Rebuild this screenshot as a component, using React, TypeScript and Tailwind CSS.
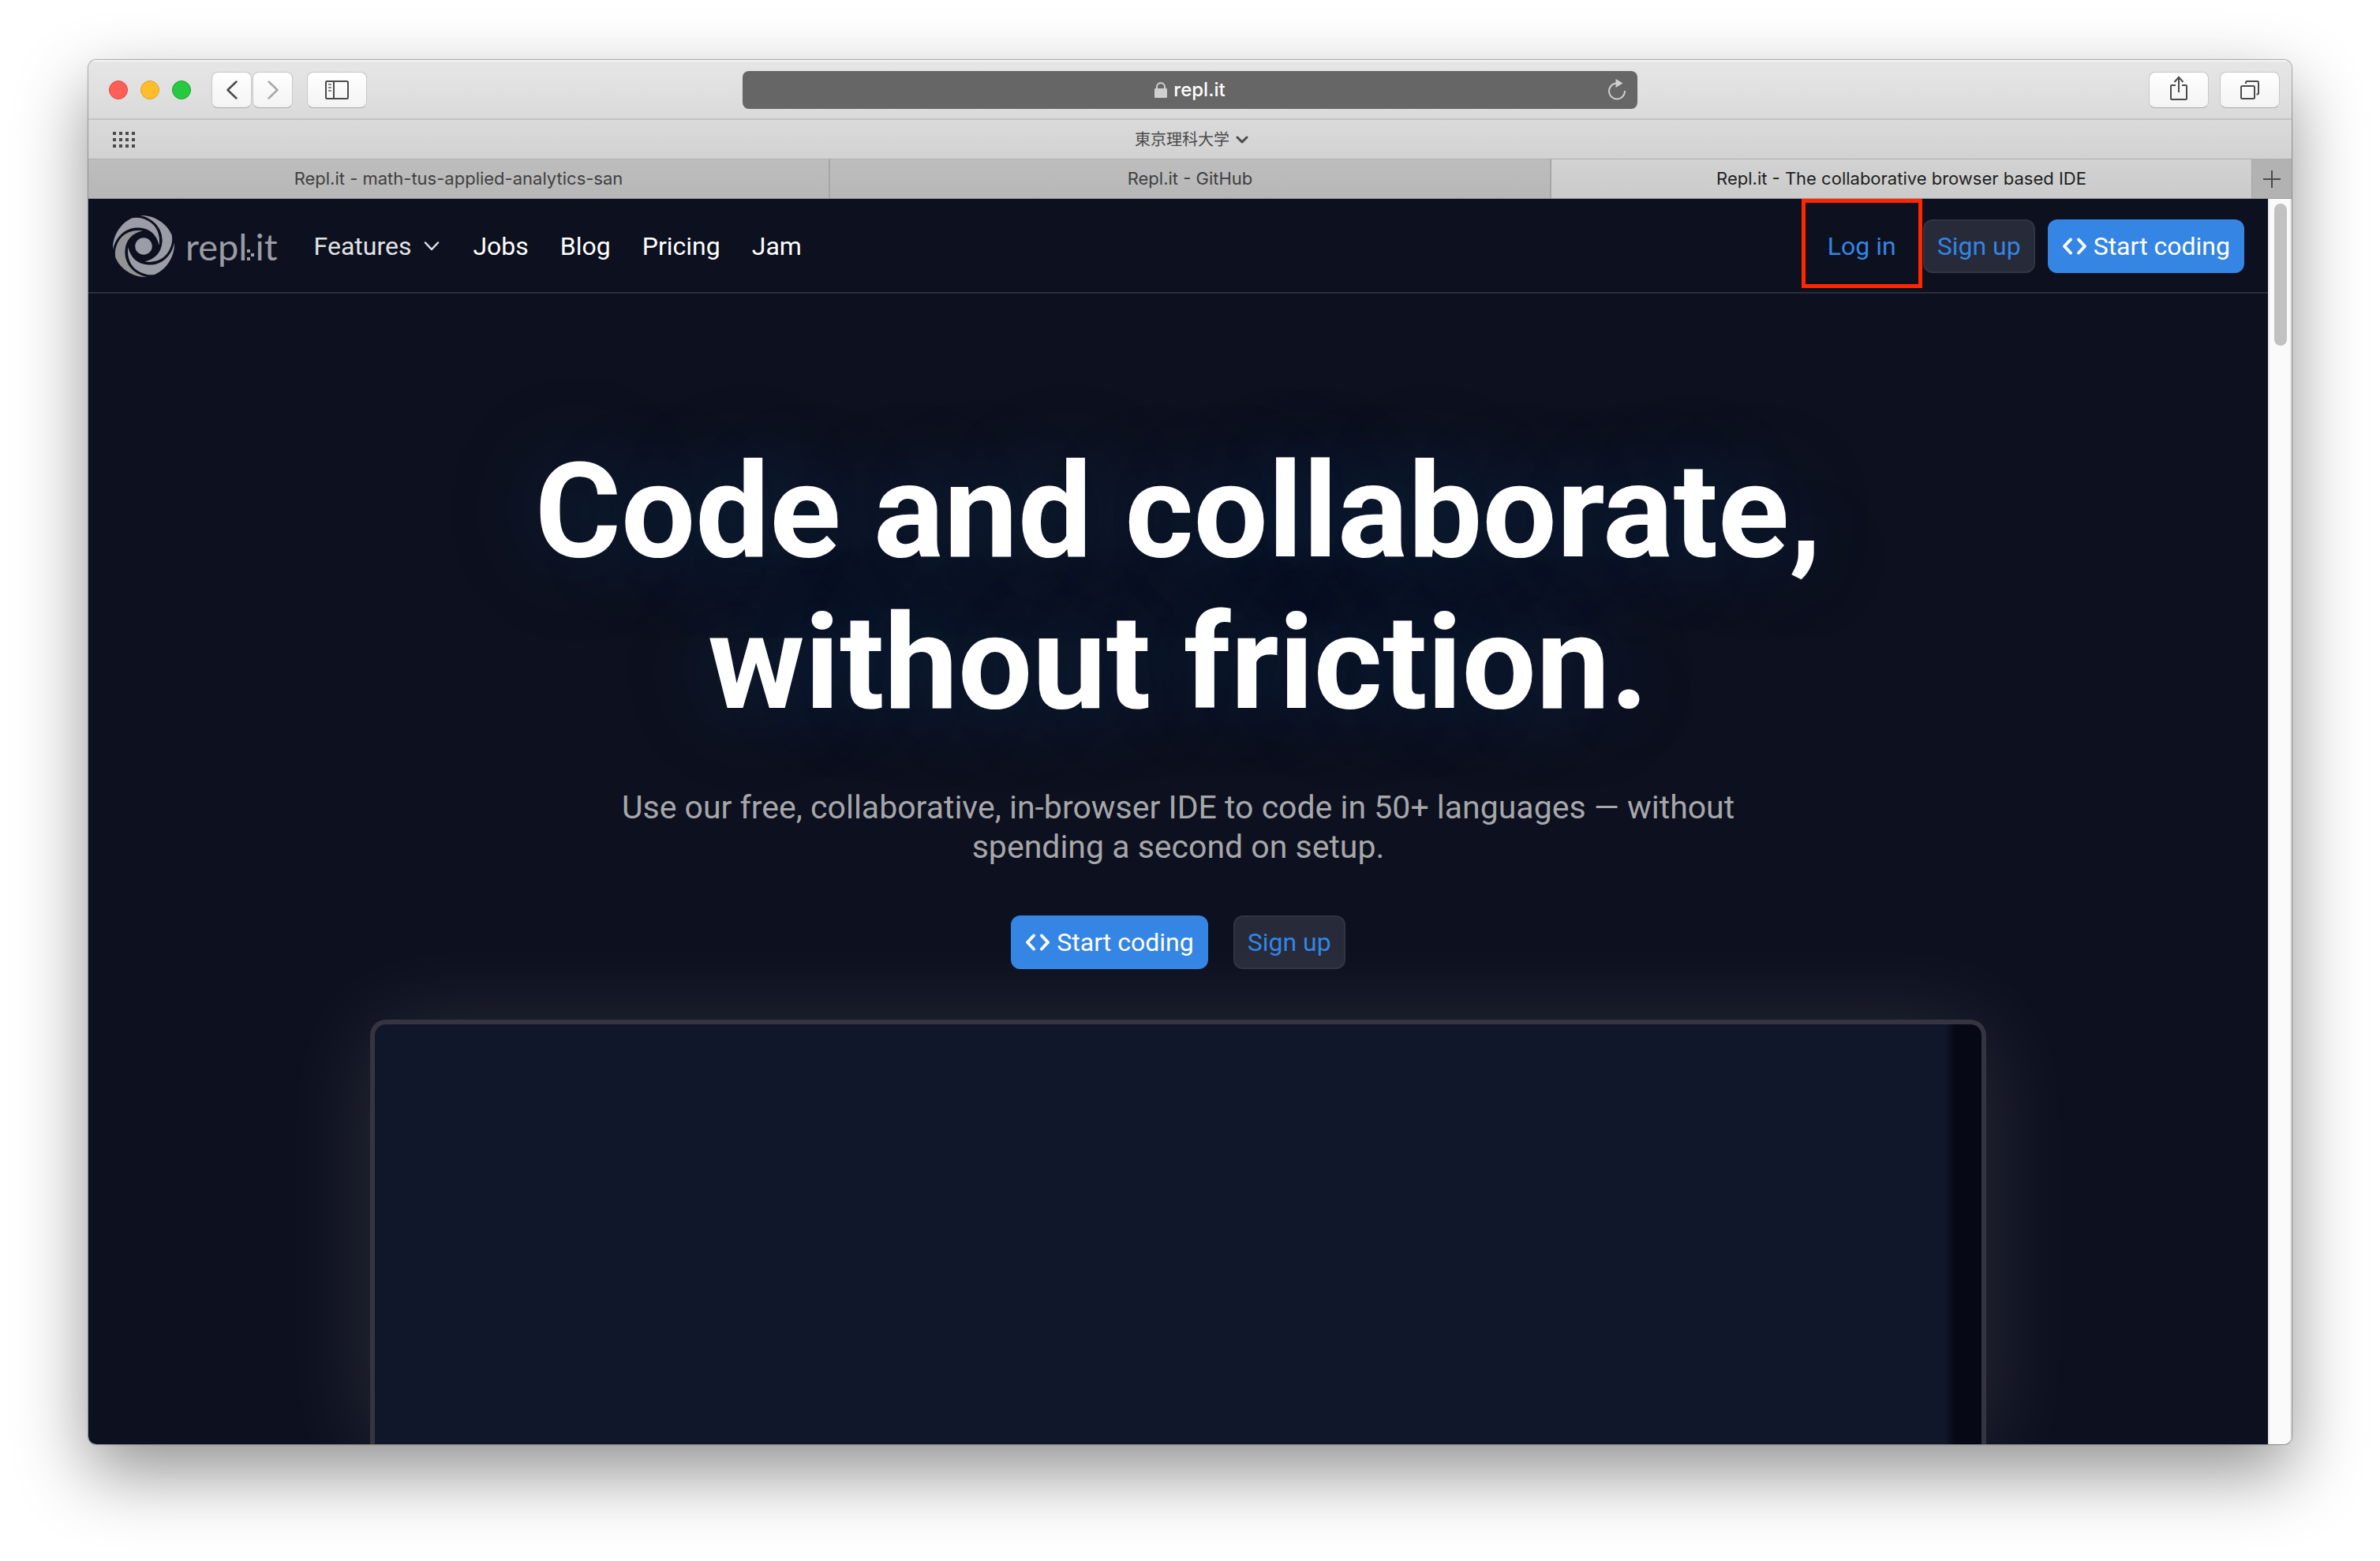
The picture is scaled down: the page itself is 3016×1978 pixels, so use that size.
import type { ReactNode } from "react";

const BLADE =
  "M40 170 C38 120 68 70 113 51 C124 49 134 49 145 51 C176 58 199 76 209 102 C215 118 217 135 214 153 C206 114 180 90 140 87 C92 84 52 116 40 170Z";

function SwirlLogo() {
  return (
    <svg viewBox="40 41 232 232" className="size-[78px] shrink-0" aria-hidden="true">
      <path d={BLADE} fill="#9a9da6" />
      <path d={BLADE} fill="#9a9da6" transform="rotate(90 156 157)" />
      <path d={BLADE} fill="#9a9da6" transform="rotate(180 156 157)" />
      <path d={BLADE} fill="#929395" transform="rotate(270 156 157)" />
      <circle cx="156" cy="157" r="32" fill="#9a9da6" />
    </svg>
  );
}

function CodeIcon() {
  return (
    <svg viewBox="0 0 32 24" className="h-6 w-8 shrink-0" fill="none" stroke="currentColor" strokeWidth="4" strokeLinecap="round" strokeLinejoin="round" aria-hidden="true">
      <path d="M11 3.500 L3 12 L11 20.500" />
      <path d="M21 3.500 L29 12 L21 20.500" />
    </svg>
  );
}

function ToolButton({ label, wide, children }: { label: string; wide?: boolean; children: ReactNode }) {
  return (
    <button
      type="button"
      aria-label={label}
      className={
        (wide ? "w-[76px] " : "w-[51px] ") +
        "flex h-[46px] items-center justify-center rounded-[8px] border border-[#c8c8c8] border-b-[#a9a9a9] bg-linear-to-b from-white to-[#f3f3f3] text-[#4b4b4b]"
      }
    >
      {children}
    </button>
  );
}

function Toolbar() {
  return (
    <div className="grid h-[74px] grid-cols-[1fr_1134px_1fr] items-center border-t-2 border-[#f4f4f4] bg-linear-to-b from-[#e6e6e6] to-[#dadada]">
      <div className="flex items-center pl-[26px]">
        <div className="flex gap-4">
          <button type="button" aria-label="Close" className="size-6 rounded-full border border-[#e2463f] bg-[#ff5f57]" />
          <button type="button" aria-label="Minimize" className="size-6 rounded-full border border-[#e1a116] bg-[#ffbd2e]" />
          <button type="button" aria-label="Zoom" className="size-6 rounded-full border border-[#17a82a] bg-[#28c940]" />
        </div>
        <div className="ml-[26px] flex gap-px">
          <ToolButton label="Back">
            <svg viewBox="0 0 16 24" className="h-6 w-4" fill="none" stroke="currentColor" strokeWidth="2.500" strokeLinecap="round" strokeLinejoin="round">
              <path d="M13.500 1.500 L2.500 12 L13.500 22.500" />
            </svg>
          </ToolButton>
          <ToolButton label="Forward">
            <svg viewBox="0 0 16 24" className="h-6 w-4 text-[#a8a8a8]" fill="none" stroke="currentColor" strokeWidth="2.500" strokeLinecap="round" strokeLinejoin="round">
              <path d="M2.500 1.500 L13.500 12 L2.500 22.500" />
            </svg>
          </ToolButton>
        </div>
        <div className="ml-[18px]">
          <ToolButton label="Show sidebar" wide>
            <svg viewBox="0 0 30 24" className="h-6 w-[30px]" fill="none" stroke="currentColor" strokeWidth="2">
              <rect x="1" y="1" width="28" height="22" rx="1.500" />
              <path d="M11 1 V23" />
              <path d="M4 5 H8 M4 9 H8 M4 13 H8" stroke="#8a8a8a" />
            </svg>
          </ToolButton>
        </div>
      </div>
      <div className="flex h-12 items-center rounded-[8px] bg-[#666666] px-[13px] text-[24px] text-white">
        <div className="flex-1" />
        <div className="flex items-center gap-2">
          <svg viewBox="0 0 16 20" className="h-5 w-4" aria-hidden="true">
            <path d="M3 9 V6 C3 -0.300 13 -0.300 13 6 V9" fill="none" stroke="#cfcfcf" strokeWidth="2" />
            <rect x="0" y="8" width="16" height="12" rx="1" fill="#cfcfcf" />
          </svg>
          <span className="font-medium">repl.it</span>
        </div>
        <div className="flex flex-1 justify-end">
          <button type="button" aria-label="Reload" className="flex">
            <svg viewBox="0 0 26 28" className="h-7 w-[26px]" aria-hidden="true">
              <path d="M12 5.500 A10 10 0 1 0 23 15" fill="none" stroke="#cfcfcf" strokeWidth="2" />
              <path d="M11.500 0 L20.500 5.500 L11.500 11Z" fill="#cfcfcf" />
            </svg>
          </button>
        </div>
      </div>
      <div className="flex justify-end gap-[14px] pr-[15px]">
        <ToolButton label="Share" wide>
          <svg viewBox="0 0 24 32" className="mb-1 h-8 w-6" fill="none" stroke="currentColor" strokeWidth="2">
            <path d="M8 12 H3 C2 12 2 12 2 13 V29 C2 30 2 30 3 30 H21 C22 30 22 30 22 29 V13 C22 12 22 12 21 12 H16" />
            <path d="M12 21 V2 M6.500 8 L12 1.800 L17.500 8" />
          </svg>
        </ToolButton>
        <ToolButton label="Show all tabs" wide>
          <svg viewBox="0 0 26 26" className="size-[26px]" fill="none" stroke="currentColor" strokeWidth="2">
            <rect x="2" y="8" width="17" height="16" rx="1.500" />
            <path d="M8 5 V3.500 C8 2.500 8.500 2 9.500 2 H22.500 C23.500 2 24 2.500 24 3.500 V17 C24 18 23.500 18.500 22.500 18.500 H21.500" />
          </svg>
        </ToolButton>
      </div>
    </div>
  );
}

function FavoritesBar() {
  return (
    <div className="grid h-[51px] grid-cols-[1fr_auto_1fr] items-center border-t-2 border-[#c2c2c2] bg-linear-to-b from-[#dadada] to-[#d2d2d2] text-[20px] text-[#4a4a4a]">
      <button type="button" aria-label="Show top sites" className="ml-[31px] justify-self-start">
        <svg viewBox="0 0 28 20" className="h-5 w-7" fill="#4a4a4a">
          {[0, 8, 16].map((y) => [0, 8, 16, 24].map((x) => <rect key={x + "-" + y} x={x} y={y} width="4" height="4" />))}
        </svg>
      </button>
      <button type="button" className="ml-1 flex items-center gap-2">
        東京理科大学
        <svg viewBox="0 0 16 12" className="h-3 w-4" fill="none" stroke="currentColor" strokeWidth="3" strokeLinecap="round" strokeLinejoin="round" aria-hidden="true">
          <path d="M2 3 L8 9 L14 3" />
        </svg>
      </button>
    </div>
  );
}

const tab = "flex items-center justify-center border-r-2 border-[#a6a6a6] bg-linear-to-b from-[#bdbdbd] to-[#b7b7b7] text-[#404040]";

function TabBar() {
  return (
    <div className="grid h-[51px] grid-cols-[940fr_914fr_888fr_50px] border-y border-t-[#aeaeae] border-b-[#9c9c9c] text-[22px]">
      <button type="button" className={tab}>Repl.it - math-tus-applied-analytics-san</button>
      <button type="button" className={tab}>Repl.it - GitHub</button>
      <button type="button" className="flex items-center justify-center border-r border-[#a6a6a6] bg-linear-to-b from-[#d2d2d2] to-[#cbcbcb] text-[#1e1e1e]">
        Repl.it - The collaborative browser based IDE
      </button>
      <button type="button" aria-label="New tab" className="flex items-center justify-center bg-[#b2b2b2]">
        <svg viewBox="0 0 22 22" className="size-[22px]" stroke="#4a4a4a" strokeWidth="2">
          <path d="M11 0 V22 M0 11 H22" />
        </svg>
      </button>
    </div>
  );
}

function PrimaryButton() {
  return (
    <button type="button" className="flex h-[68px] items-center gap-2 rounded-[12px] bg-[#3485e4] px-[18px] text-[32px] text-white">
      <CodeIcon />
      Start coding
    </button>
  );
}

function SecondaryButton() {
  return (
    <button type="button" className="flex h-[68px] items-center rounded-[12px] border-2 border-[#323444] bg-[#262a39] px-4 text-[32px] text-[#3485e4]">
      Sign up
    </button>
  );
}

function SiteNav() {
  return (
    <header className="flex h-[120px] shrink-0 items-center border-b-2 border-[#2b2d3f] pt-[2px] pl-[31px] pr-[30px] text-[32px] text-white">
      <a href="#home" aria-label="repl.it" className="flex items-center gap-[14px] font-['Lato'] text-[47px] text-[#9a9da6]">
        <SwirlLogo />
        <span className="flex items-center">
          repl
          <svg viewBox="0 0 10 14" className="mt-[22px] h-[14px] w-[10px]" fill="#9a9da6" aria-hidden="true">
            <rect x="0" y="0" width="4" height="4" />
            <rect x="5" y="5" width="4" height="4" />
            <rect x="0" y="10" width="4" height="4" />
          </svg>
          it
        </span>
      </a>
      <nav className="ml-[46px] flex items-center gap-10">
        <button type="button" className="flex items-center gap-4 pr-[2px] text-[#e2e3e6]">
          Features
          <svg viewBox="0 0 20 12" className="h-3 w-5" fill="none" stroke="currentColor" strokeWidth="2.500" strokeLinecap="round" strokeLinejoin="round" aria-hidden="true">
            <path d="M2 1.500 L10 10 L18 1.500" />
          </svg>
        </button>
        <a href="#jobs">Jobs</a>
        <a href="#blog">Blog</a>
        <a href="#pricing">Pricing</a>
        <a href="#jam">Jam</a>
      </nav>
      <div className="ml-auto flex items-center gap-4">
        <div className="relative">
          <a href="#login" className="flex h-[68px] items-center px-[18px] text-[#3485e4]">Log in</a>
          <div className="pointer-events-none absolute -top-[26px] -right-[15px] -bottom-[19px] -left-[15px] z-10 border-[5px] border-[#ff2600]" />
        </div>
        <SecondaryButton />
        <PrimaryButton />
      </div>
    </header>
  );
}

function Hero() {
  return (
    <main className="flex min-h-0 flex-1 flex-col items-center overflow-hidden pt-[180px] text-center">
      <h1 className="max-w-[1800px] text-[167px] leading-[192px] font-bold text-white [text-shadow:0_0_120px_rgba(13,130,210,0.25)]">
        Code and collaborate, <br />
        without friction.
      </h1>
      <p className="mt-[62px] max-w-[1500px] text-[41px] leading-[50px] text-[#a6a7ab]">
        Use our free, collaborative, in-browser IDE to code in 50+ languages — without <br />
        spending a second on setup.
      </p>
      <div className="mt-[62px] flex gap-8">
        <PrimaryButton />
        <SecondaryButton />
      </div>
      <div className="relative mt-16 min-h-0 w-full max-w-[2048px] flex-1 overflow-visible rounded-t-[20px] border-6 border-b-0 border-[#343541] bg-linear-to-l from-[#060815] from-[34px] to-[#11172b] to-[46px] shadow-[0_8px_128px_rgba(255,250,245,0.12)]" />
    </main>
  );
}

export default function App() {
  return (
    <div className="flex h-screen flex-col bg-white px-[112px] pt-[76px] pb-[148px] font-['Inter','Noto_Sans_CJK_JP',sans-serif]">
      <div className="flex min-h-0 flex-1 flex-col overflow-hidden rounded-[10px] shadow-[0_0_1px_1px_rgba(0,0,0,0.3),0_36px_90px_rgba(0,0,0,0.43)]">
        <Toolbar />
        <FavoritesBar />
        <TabBar />
        <div className="flex min-h-0 flex-1">
          <div className="flex min-w-0 flex-1 flex-col overflow-hidden bg-[#0d101e] font-['Roboto',sans-serif]">
            <SiteNav />
            <Hero />
          </div>
          <div className="w-[30px] border-x-2 border-[#e8e8e8] bg-[#fafafa] py-[6px] pl-[6px]">
            <div className="h-[180px] w-4 rounded-full bg-[#c1c1c1]" />
          </div>
        </div>
      </div>
    </div>
  );
}
